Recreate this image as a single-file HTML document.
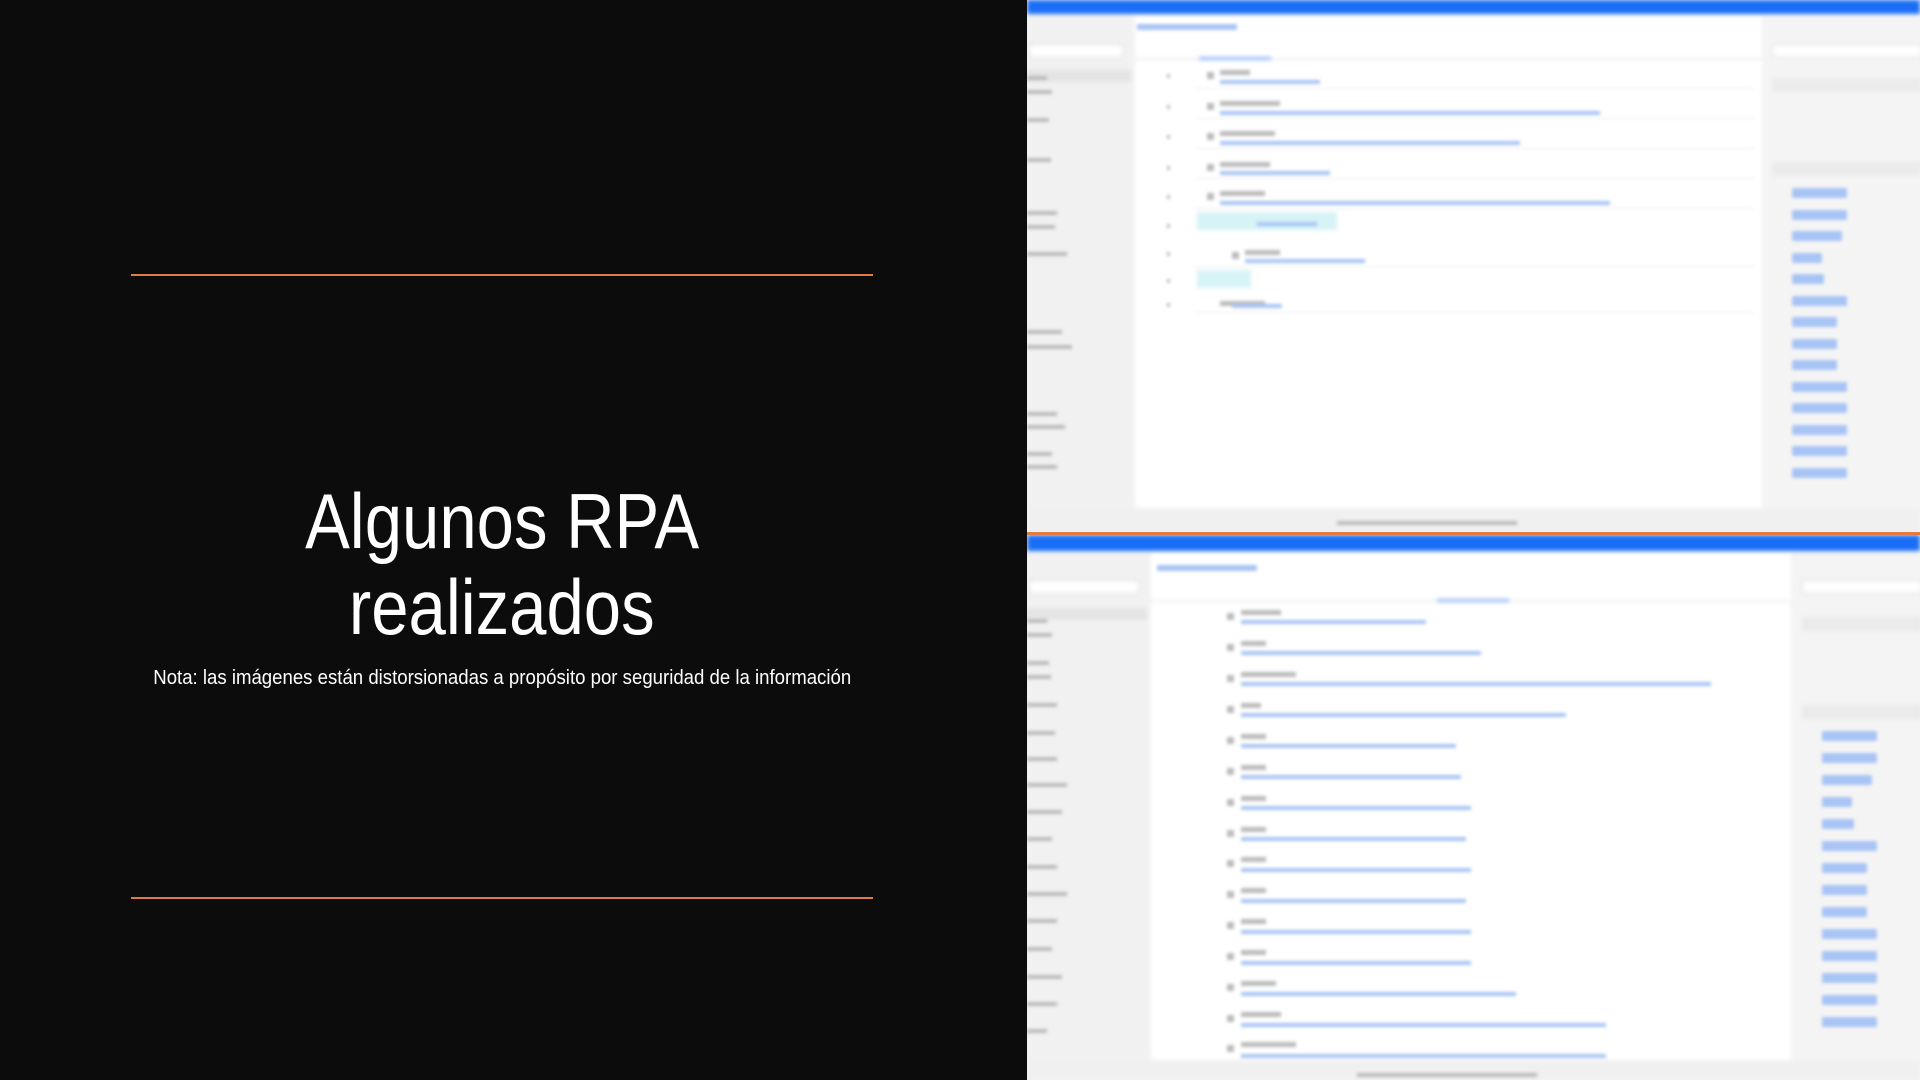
<!DOCTYPE html>
<html><head><meta charset="utf-8"><style>
*{margin:0;padding:0;box-sizing:border-box}
body{width:1920px;height:1080px;background:#0c0c0c;position:relative;overflow:hidden;font-family:"Liberation Sans",sans-serif}
.ln{position:absolute;left:131px;width:742px;height:2px;background:#e07b45}
.t{position:absolute;left:0;width:1004px;text-align:center;color:#fff;white-space:nowrap}
.t span{display:inline-block;transform:scaleX(.86)}
.shot{position:absolute;left:1027px;width:893px;overflow:hidden;background:#f3f3f3}
.bl{filter:blur(2px);position:absolute;inset:0}
.a{position:absolute}
</style></head><body>
<div class="ln" style="top:274px"></div>
<div class="ln" style="top:897px"></div>
<div class="t" style="top:476px;font-size:78px;line-height:90px"><span>Algunos RPA</span></div>
<div class="t" style="top:562px;font-size:78px;line-height:90px"><span>realizados</span></div>
<div class="t" style="top:665px;font-size:20px;line-height:26px"><span style="transform:scaleX(.93)">Nota: las imágenes están distorsionadas a propósito por seguridad de la información</span></div>

<!-- top screenshot -->
<div class="shot" style="top:0;height:533px">
<div class="bl">
<div class="a" style="left:0;top:0;width:893px;height:14px;background:#1a6ef5"></div>
<div class="a" style="left:0;top:14px;width:106px;height:519px;background:#f1f1f1"></div>
<div class="a" style="left:2px;top:44px;width:94px;height:14px;background:#fff;border:1px solid #ddd"></div>
<div class="a" style="left:0;top:70px;width:104px;height:12px;background:#e4e4e4"></div>
<div class="a" style="left:108px;top:16px;width:627px;height:492px;background:#fff"></div>
<div class="a" style="left:108px;top:58px;width:627px;height:2px;background:#eee"></div>
<div class="a" style="left:172px;top:57px;width:72px;height:3px;background:#8fb5f5"></div>
<div class="a" style="left:170px;top:212px;width:140px;height:18px;background:#d6f3f6"></div>
<div class="a" style="left:170px;top:270px;width:54px;height:18px;background:#d6f3f6"></div>
<div class="a" style="left:738px;top:14px;width:155px;height:519px;background:#f4f4f4"></div>
<div class="a" style="left:745px;top:44px;width:150px;height:14px;background:#fff;border:1px solid #ddd"></div>
<div class="a" style="left:745px;top:78px;width:150px;height:14px;background:#ebebeb"></div>
<div class="a" style="left:745px;top:162px;width:150px;height:14px;background:#ebebeb"></div>
<div class="a" style="left:0;top:508px;width:893px;height:25px;background:#f0f0f0"></div>
</div>
<svg class="bl" width="893" height="533" style="filter:blur(1.5px)">
<g fill="#bbb">
<rect x="193" y="70" width="30" height="5"/><rect x="193" y="101" width="60" height="5"/><rect x="193" y="131" width="55" height="5"/><rect x="193" y="162" width="50" height="5"/><rect x="193" y="191" width="45" height="5"/><rect x="218" y="250" width="35" height="5"/><rect x="193" y="301" width="45" height="5"/>
<rect x="180" y="72" width="7" height="7"/><rect x="180" y="103" width="7" height="7"/><rect x="180" y="133" width="7" height="7"/><rect x="180" y="164" width="7" height="7"/><rect x="180" y="193" width="7" height="7"/><rect x="205" y="252" width="7" height="7"/>
<rect x="140" y="74" width="3" height="4"/><rect x="140" y="105" width="3" height="4"/><rect x="140" y="135" width="3" height="4"/><rect x="140" y="166" width="3" height="4"/><rect x="140" y="195" width="3" height="4"/><rect x="140" y="224" width="3" height="4"/><rect x="140" y="252" width="3" height="4"/><rect x="140" y="279" width="3" height="4"/><rect x="140" y="303" width="3" height="4"/>
<rect x="0" y="76" width="20" height="4"/><rect x="0" y="90" width="25" height="4"/><rect x="0" y="118" width="22" height="4"/><rect x="0" y="158" width="24" height="4"/><rect x="0" y="211" width="30" height="4"/><rect x="0" y="225" width="28" height="4"/><rect x="0" y="252" width="40" height="4"/><rect x="0" y="330" width="35" height="4"/><rect x="0" y="345" width="45" height="4"/><rect x="0" y="412" width="30" height="4"/><rect x="0" y="425" width="38" height="4"/><rect x="0" y="452" width="25" height="4"/><rect x="0" y="465" width="30" height="4"/>
<rect x="310" y="521" width="180" height="4"/>
</g>
<g fill="#a8c4f5">
<rect x="193" y="80" width="100" height="4"/><rect x="193" y="111" width="380" height="4"/><rect x="193" y="141" width="300" height="4"/><rect x="193" y="171" width="110" height="4"/><rect x="193" y="201" width="390" height="4"/><rect x="230" y="222" width="60" height="4"/><rect x="218" y="259" width="120" height="4"/><rect x="205" y="304" width="50" height="4"/>
<rect x="765" y="188" width="55" height="10" rx="2"/><rect x="765" y="210" width="55" height="10" rx="2"/><rect x="765" y="231" width="50" height="10" rx="2"/><rect x="765" y="253" width="30" height="10" rx="2"/><rect x="765" y="274" width="32" height="10" rx="2"/><rect x="765" y="296" width="55" height="10" rx="2"/><rect x="765" y="317" width="45" height="10" rx="2"/><rect x="765" y="339" width="45" height="10" rx="2"/><rect x="765" y="360" width="45" height="10" rx="2"/><rect x="765" y="382" width="55" height="10" rx="2"/><rect x="765" y="403" width="55" height="10" rx="2"/><rect x="765" y="425" width="55" height="10" rx="2"/><rect x="765" y="446" width="55" height="10" rx="2"/><rect x="765" y="468" width="55" height="10" rx="2"/>
<rect x="110" y="24" width="100" height="6"/>
</g>
<g fill="#eee"><rect x="168" y="88" width="560" height="1"/><rect x="168" y="118" width="560" height="1"/><rect x="168" y="148" width="560" height="1"/><rect x="168" y="178" width="560" height="1"/><rect x="168" y="208" width="560" height="1"/><rect x="168" y="266" width="560" height="1"/><rect x="168" y="312" width="560" height="1"/></g>
</svg>
</div>
<div class="a" style="left:1027px;top:532px;width:893px;height:3px;background:#e07b45"></div>

<!-- bottom screenshot -->
<div class="shot" style="top:535px;height:545px">
<div class="bl">
<div class="a" style="left:0;top:0;width:893px;height:16px;background:#1a6ef5"></div>
<div class="a" style="left:0;top:16px;width:122px;height:510px;background:#f1f1f1"></div>
<div class="a" style="left:2px;top:45px;width:110px;height:14px;background:#fff;border:1px solid #ddd"></div>
<div class="a" style="left:0;top:73px;width:120px;height:12px;background:#e4e4e4"></div>
<div class="a" style="left:124px;top:18px;width:640px;height:507px;background:#fff"></div>
<div class="a" style="left:124px;top:65px;width:640px;height:2px;background:#eee"></div>
<div class="a" style="left:410px;top:64px;width:72px;height:3px;background:#8fb5f5"></div>
<div class="a" style="left:768px;top:16px;width:125px;height:510px;background:#f4f4f4"></div>
<div class="a" style="left:775px;top:45px;width:120px;height:14px;background:#fff;border:1px solid #ddd"></div>
<div class="a" style="left:775px;top:82px;width:120px;height:14px;background:#ebebeb"></div>
<div class="a" style="left:775px;top:170px;width:120px;height:14px;background:#ebebeb"></div>
<div class="a" style="left:0;top:525px;width:893px;height:20px;background:#f0f0f0"></div>
</div>
<svg class="bl" width="893" height="545" style="filter:blur(1.5px)">
<g fill="#bbb">
<rect x="214" y="75" width="40" height="5"/><rect x="214" y="106" width="25" height="5"/><rect x="214" y="137" width="55" height="5"/><rect x="214" y="168" width="20" height="5"/><rect x="214" y="199" width="25" height="5"/><rect x="214" y="230" width="25" height="5"/><rect x="214" y="261" width="25" height="5"/><rect x="214" y="292" width="25" height="5"/><rect x="214" y="322" width="25" height="5"/><rect x="214" y="353" width="25" height="5"/><rect x="214" y="384" width="25" height="5"/><rect x="214" y="415" width="25" height="5"/><rect x="214" y="446" width="35" height="5"/><rect x="214" y="477" width="40" height="5"/><rect x="214" y="507" width="55" height="5"/>
<rect x="200" y="78" width="7" height="7"/><rect x="200" y="109" width="7" height="7"/><rect x="200" y="140" width="7" height="7"/><rect x="200" y="171" width="7" height="7"/><rect x="200" y="202" width="7" height="7"/><rect x="200" y="233" width="7" height="7"/><rect x="200" y="264" width="7" height="7"/><rect x="200" y="295" width="7" height="7"/><rect x="200" y="325" width="7" height="7"/><rect x="200" y="356" width="7" height="7"/><rect x="200" y="387" width="7" height="7"/><rect x="200" y="418" width="7" height="7"/><rect x="200" y="449" width="7" height="7"/><rect x="200" y="480" width="7" height="7"/><rect x="200" y="510" width="7" height="7"/>
<rect x="0" y="84" width="20" height="4"/><rect x="0" y="98" width="25" height="4"/><rect x="0" y="126" width="22" height="4"/><rect x="0" y="140" width="24" height="4"/><rect x="0" y="168" width="30" height="4"/><rect x="0" y="196" width="28" height="4"/><rect x="0" y="222" width="30" height="4"/><rect x="0" y="248" width="40" height="4"/><rect x="0" y="275" width="35" height="4"/><rect x="0" y="302" width="25" height="4"/><rect x="0" y="330" width="30" height="4"/><rect x="0" y="357" width="40" height="4"/><rect x="0" y="384" width="30" height="4"/><rect x="0" y="412" width="25" height="4"/><rect x="0" y="440" width="35" height="4"/><rect x="0" y="467" width="30" height="4"/><rect x="0" y="494" width="20" height="4"/>
<rect x="330" y="538" width="180" height="4"/>
</g>
<g fill="#a8c4f5">
<rect x="214" y="85" width="185" height="4"/><rect x="214" y="116" width="240" height="4"/><rect x="214" y="147" width="470" height="4"/><rect x="214" y="178" width="325" height="4"/><rect x="214" y="209" width="215" height="4"/><rect x="214" y="240" width="220" height="4"/><rect x="214" y="271" width="230" height="4"/><rect x="214" y="302" width="225" height="4"/><rect x="214" y="333" width="230" height="4"/><rect x="214" y="364" width="225" height="4"/><rect x="214" y="395" width="230" height="4"/><rect x="214" y="426" width="230" height="4"/><rect x="214" y="457" width="275" height="4"/><rect x="214" y="488" width="365" height="4"/><rect x="214" y="519" width="365" height="4"/>
<rect x="795" y="196" width="55" height="10" rx="2"/><rect x="795" y="218" width="55" height="10" rx="2"/><rect x="795" y="240" width="50" height="10" rx="2"/><rect x="795" y="262" width="30" height="10" rx="2"/><rect x="795" y="284" width="32" height="10" rx="2"/><rect x="795" y="306" width="55" height="10" rx="2"/><rect x="795" y="328" width="45" height="10" rx="2"/><rect x="795" y="350" width="45" height="10" rx="2"/><rect x="795" y="372" width="45" height="10" rx="2"/><rect x="795" y="394" width="55" height="10" rx="2"/><rect x="795" y="416" width="55" height="10" rx="2"/><rect x="795" y="438" width="55" height="10" rx="2"/><rect x="795" y="460" width="55" height="10" rx="2"/><rect x="795" y="482" width="55" height="10" rx="2"/>
<rect x="130" y="30" width="100" height="6"/>
</g>
</svg>
</div>
</body></html>
